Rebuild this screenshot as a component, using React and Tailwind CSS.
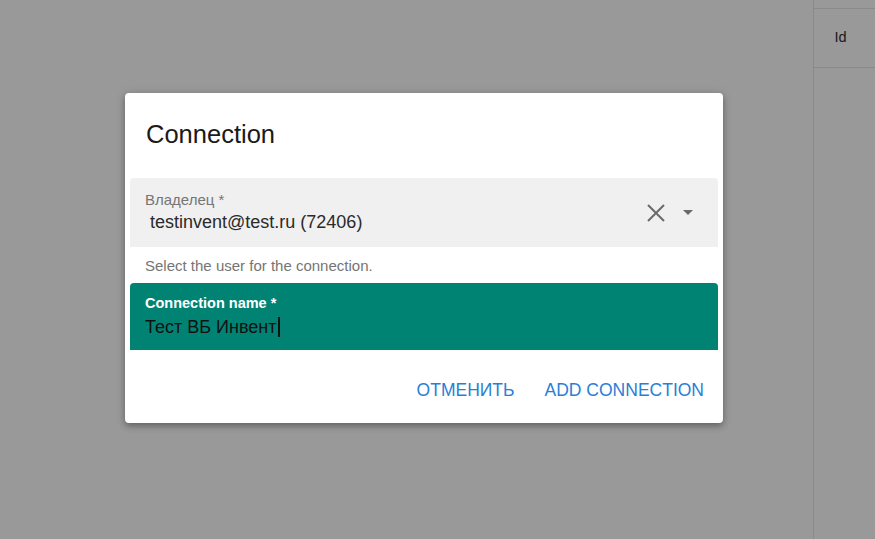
export default function App() {
  return (
    <div
      className="relative h-[539px] w-[875px] overflow-hidden bg-[#999999]"
      style={{ fontFamily: '"Liberation Sans", Arial, sans-serif' }}
    >
      {/* table column behind the backdrop */}
      <div className="absolute right-0 top-0 h-full w-[62px] border-l border-[#8a8a8a]">
        <div className="mt-[8px] flex h-[60px] items-center justify-center border-y border-[#8a8a8a] pr-[8px] text-[14.5px] text-[#1a1a1a]">
          Id
        </div>
      </div>

      <div className="absolute left-[125px] top-[93px] w-[598px] rounded-[4px] bg-white shadow-[0_3px_6px_rgba(0,0,0,0.3),0_1px_12px_rgba(0,0,0,0.1)]">
        <h2 className="px-[21px] pb-[29px] pt-[26px] text-[25.5px] leading-[30px] text-[#1a1a1a]">Connection</h2>

        <div className="px-[5px]">
          <div className="flex h-[69px] items-center rounded-t-[4px] bg-[#f0f0f0] pl-[15px] pr-[24px]">
            <div className="flex-1">
              <div className="mt-[1px] text-[15px] leading-[18px] text-[#757575]">Владелец *</div>
              <div className="pl-[5px] text-[18px] leading-[26px] text-[#2a2a2a]">testinvent@test.ru (72406)</div>
            </div>
            <svg width="20" height="20" viewBox="0 0 20 20" className="text-[#6a6a6a]">
              <path d="M2 2 L18 18 M18 2 L2 18" stroke="currentColor" strokeWidth="2" fill="none" />
            </svg>
            <svg width="12" height="8" viewBox="0 0 12 8" className="ml-[16px]">
              <path d="M1 1 L11 1 L6 6 Z" fill="#6a6a6a" />
            </svg>
          </div>
          <div className="px-[15px] pb-[9px] pt-[10px] text-[15px] leading-[17px] text-[#757575]">
            Select the user for the connection.
          </div>
          <div className="flex h-[67px] flex-col justify-center rounded-t-[4px] bg-[#018374] px-[15px]">
            <div className="mt-[1px] text-[14.5px] font-bold leading-[18px] text-white">Connection name *</div>
            <div className="mt-[2px] flex items-center text-[18px] leading-[26px] text-[#111]">
              Тест ВБ Инвент
              <span className="ml-[1px] inline-block h-[20px] w-[2px] bg-[#111]" />
            </div>
          </div>
        </div>

        <div className="flex justify-end gap-[30px] pb-[22px] pr-[19px] pt-[29px]">
          <button className="text-[17.5px] uppercase leading-[22px] text-[#2a7fd4]">Отменить</button>
          <button className="text-[17.5px] uppercase leading-[22px] text-[#2a7fd4]">Add connection</button>
        </div>
      </div>
    </div>
  );
}
